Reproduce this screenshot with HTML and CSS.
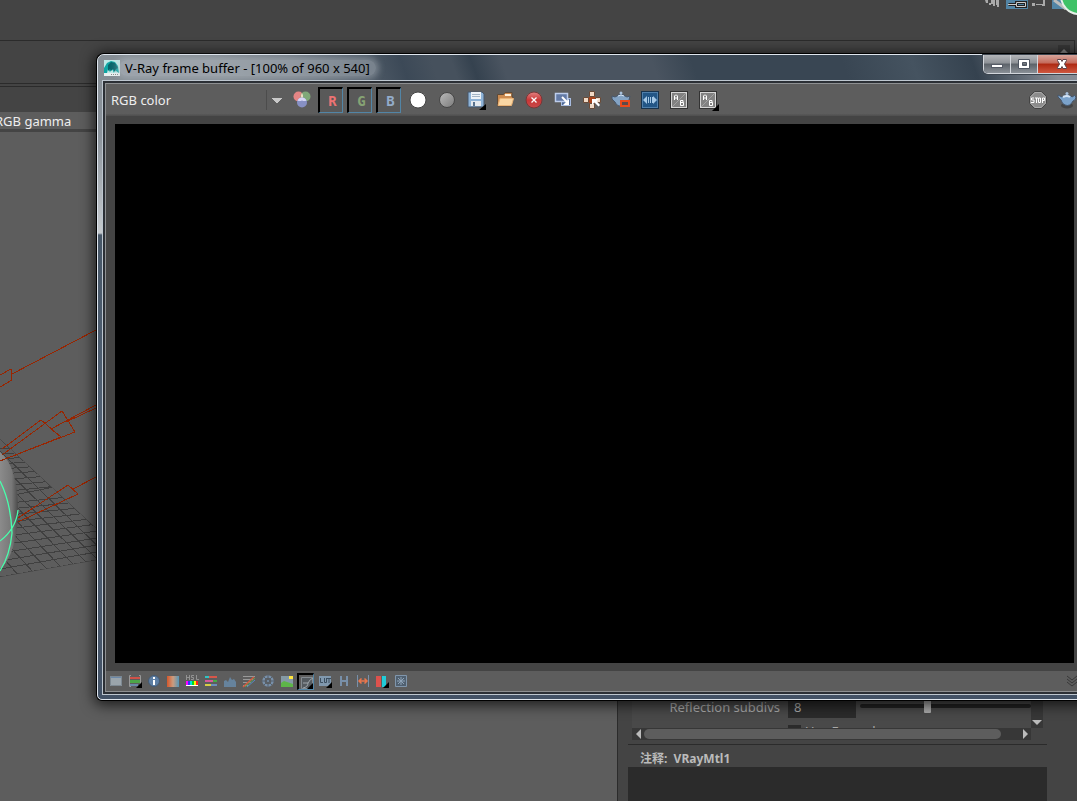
FILE: index.html
```html
<!DOCTYPE html>
<html lang="en">
<head>
<meta charset="utf-8">
<title>V-Ray frame buffer</title>
<link rel="stylesheet" href="styles.css">
</head>
<body>
<div class="app">
  <header class="status">
    <svg class="status-icons" width="92" height="10" viewBox="0 0 92 10">
      <path d="M0 0h3v3h3v2h-2V3H1zM6 0h4v6H8V4H6zM11 0h3v7h-2V5h-1z" fill="#aaa"/>
      <rect x="21" y="0" width="22" height="9" fill="#5285a6"/>
      <path d="M23.500 4.500h7M31.500 2.500h9v4h-9z" fill="none" stroke="#222" stroke-width="3"/>
      <path d="M23 4.500h8M31.500 2.500h9v4h-9z" fill="none" stroke="#ccc"/>
      <path d="M47 3h3v3h-3zM51 4h6v1h-6zM58 0h2v6h-3v-2h1z" fill="#aaa"/>
      <path d="M67 0h25v9H67z" fill="#5285a6"/><path d="M69 0l12 9" stroke="#bbb" stroke-width="3"/>
    </svg>
    <svg class="badge" width="40" height="40" viewBox="0 0 40 40"><circle cx="20" cy="20" r="18" fill="#3fc267" stroke="#e6efe8" stroke-width="2"/></svg>
  </header>
  <div class="shelf"><button class="scroll-up" aria-label="Scroll up"></button></div>
  <main class="work">
    <section class="viewport">
      <div class="spacer"></div>
      <div class="gamma">RGB gamma</div>
      <svg class="scene" width="97" height="270" viewBox="0 0 97 270">
        <defs>
          <clipPath id="floor"><path d="M0 119L97 209v31L0 257z"/></clipPath>
          <linearGradient id="ball"><stop offset="0" stop-color="#8b8b8b"/><stop offset=".65" stop-color="#777"/><stop offset="1" stop-color="#4a4a4a"/></linearGradient>
        </defs>
        <g clip-path="url(#floor)" fill="none" stroke="#404040" shape-rendering="crispEdges">
          <path d="M0 119L97 209M0 257L97 240M0 249L97 232M0 241L97 225M0 233L97 218M0 225L97 211M0 217L97 204M0 210L97 198M0 203L97 192M0 196L97 186M0 190L97 180M0 184L97 174M0 178L97 158M0 172L97 162M0 166L97 157M0 160L97 152M0 154L97 147M0 149L97 142M0 144L97 137M0 139L97 132M0 134L97 127M0 129L97 122"/>
          <path d="M0 131L112 240M0 144L100 242M0 157L88 244M0 170L74 245M0 184L62 248M0 200L48 250M0 216L34 253M0 234L18 255"/>
        </g>
        <path d="M0 132C15 144 18 170 18 193C17 224 10 240 0 249z" fill="url(#ball)"/>
        <path d="M0 161Q11 183 12 213Q10 235 0 251M0 221Q16 209 18 190" fill="none" stroke="#48ffac" stroke-width="1.300"/>
        <g fill="none" stroke="#992500" shape-rendering="crispEdges">
          <path d="M96 10L12 54M0 55L11 49L12 60L0 67"/>
          <path d="M96 85L51 109L61 117M96 88L66 102M2 135L62 91L75 112L0 141M2 129L41 100L61 117L5 139"/>
          <path d="M96 157L73 169M18 198L68 165L78 174L18 202"/>
        </g>
      </svg>
    </section>
    <aside class="panel">
      <div class="attributes">
        <div class="fields">
          <label class="field-label" for="subdivs">Reflection subdivs</label>
          <input class="field" id="subdivs" type="text" value="8">
          <input class="slider" type="range" min="0" max="100" value="39" aria-label="Reflection subdivs amount">
          <label class="check"><input type="checkbox" checked>Use Fresnel</label>
        </div>
        <div class="vbar"><button class="arrow down" aria-label="Scroll down"></button></div>
      </div>
      <div class="hbar">
        <button class="arrow left" aria-label="Scroll left"></button>
        <div class="thumb"></div>
        <button class="arrow right" aria-label="Scroll right"></button>
      </div>
      <label class="notes-label" for="notes">注释:&nbsp; VRayMtl1</label>
      <textarea class="notes" id="notes"></textarea>
    </aside>
  </main>
</div>

<div class="window">
  <div class="titlebar">
    <svg class="app-icon" width="16" height="16" viewBox="0 0 16 16"><rect width="16" height="16" fill="#bfe9e6"/><path d="M0 13V8l3-5 4-2 4 1 3 4 1 7-3-2-1-3-1 5-2-4-2 3-2-3-1 4z" fill="#0fa5a3"/><path d="M4 5l3-3 4 1 3 5-2 1-1 3-2-3-2 2-1-2-2 2z" fill="#08656b"/><path d="M0 13h16v3H0z" fill="#e9f1f1"/><path d="M7 14.500h7" stroke="#888" stroke-dasharray="1 1"/></svg>
    <span class="title">V-Ray frame buffer - [100% of 960 x 540]</span>
    <div class="controls">
      <button class="ctl" aria-label="Minimize"><svg width="14" height="10" viewBox="0 0 14 10"><rect x="1.500" y="5.500" width="11" height="3" fill="#fff" stroke="#555b66"/></svg></button>
      <button class="ctl" aria-label="Maximize"><svg width="14" height="12" viewBox="0 0 14 12"><path d="M1.500 1.500h11v9h-11zM5.500 4.500v3h4v-3z" fill="#fff" fill-rule="evenodd" stroke="#4e5561"/></svg></button>
      <button class="ctl close" aria-label="Close"><svg width="14" height="12" viewBox="0 0 14 12"><path d="M2.500 1.500H6l1 2 1-2h3.500v1L9.500 6l2 3.500v1H8l-1-2-1 2H2.500v-1l2-3.500-2-3.500z" fill="#fff" stroke="#59434a"/></svg></button>
    </div>
  </div>
  <div class="client">
    <div class="toolbar">
      <select class="channel" aria-label="Channel"><option>RGB color</option></select>
      <div class="tools">
        <button class="tool" aria-label="Color corrections"><svg width="20" height="20" viewBox="0 0 20 20"><circle cx="6.500" cy="6.500" r="5" fill="#e58585"/><circle cx="13.500" cy="6.500" r="5" fill="#7fa878"/><circle cx="10" cy="12.500" r="5" fill="#8790c4"/><path d="M10 3a5 5 0 0 1 1 4.500a5 5 0 0 1-2 0A5 5 0 0 1 10 3z" fill="#e8dcc0"/><path d="M5.500 10.500a5 5 0 0 1 4.500-3 5 5 0 0 1 4.500 3 5 5 0 0 1-4.500 0 5 5 0 0 1-4.500 0z" fill="#d5d5f5"/></svg></button>
        <button class="tool boxed red">R</button>
        <button class="tool boxed green">G</button>
        <button class="tool boxed blue">B</button>
        <button class="tool" aria-label="Alpha"><svg width="20" height="20" viewBox="0 0 20 20"><circle cx="10" cy="10" r="8" fill="#fff" stroke="#444"/></svg></button>
        <button class="tool" aria-label="Monochrome"><svg width="20" height="20" viewBox="0 0 20 20"><defs><linearGradient id="gray" x2="1" y2="1"><stop stop-color="#bbb"/><stop offset="1" stop-color="#7b7b7b"/></linearGradient></defs><circle cx="10" cy="10" r="7.500" fill="url(#gray)" stroke="#454545"/></svg></button>
        <button class="tool" aria-label="Save image"><svg width="22" height="22" viewBox="0 0 22 22"><path d="M3 3h14l2 2v13H3z" fill="#8db2d6" stroke="#47566a"/><path d="M6 3h10v7H6z" fill="#edf2f7"/><path d="M7 5.500h8M7 7.500h8" stroke="#a3b4c5"/><path d="M6 12h10v5H6z" fill="#e3e8ee"/><path d="M8 13h2v4H8z" fill="#58728e"/><path d="M21 15v6h-7z" fill="#000"/></svg></button>
        <button class="tool" aria-label="Load image"><svg width="20" height="20" viewBox="0 0 20 20"><path d="M2.500 16V4.500h6l1.500-2h7V7H18v1l-2 8z" fill="#cc8b50" stroke="#5e4a38"/><path d="M10 5h6" stroke="#fff0d8" stroke-width="2"/><path d="M3 15.500L5 8.500h13.500l-2 7z" fill="#f9d6a4" stroke="#e9b377"/></svg></button>
        <button class="tool" aria-label="Clear image"><svg width="20" height="20" viewBox="0 0 20 20"><defs><linearGradient id="redball" x2="0" y2="1"><stop stop-color="#e38282"/><stop offset=".5" stop-color="#c93636"/><stop offset="1" stop-color="#c84a4a"/></linearGradient></defs><circle cx="10" cy="10" r="8" fill="url(#redball)" stroke="#763838"/><path d="M7.500 7.500l5 5M12.500 7.500l-5 5" stroke="#fff" stroke-width="1.300"/></svg></button>
        <button class="tool" aria-label="Duplicate to host"><svg width="20" height="20" viewBox="0 0 20 20"><rect x="8.500" y="8.500" width="9" height="7" fill="#506b98" stroke="#a8bce0"/><rect x="2.500" y="3.500" width="12" height="8" fill="#637aa5" stroke="#bdcdec" stroke-width="1.500"/><path d="M9 7l5 5" stroke="#fff" stroke-width="2"/><path d="M16 9v6h-6z" fill="#fff"/></svg></button>
        <button class="tool" aria-label="Track mouse"><svg width="20" height="20" viewBox="0 0 20 20"><path d="M7.500 1.500h5v5h-5zM1.500 7.500h5v5h-5zM13.500 7.500h5v5h-5zM7.500 13.500h5v5h-5z" fill="#f0d9c6" stroke="#694b38"/><path d="M7 7h6v6H7z" fill="#a9431c"/><path d="M10 9h7l-2.500 2 3.500 4-1.500 1.500-4-4L10 15z" fill="#fff"/></svg></button>
        <button class="tool" aria-label="Region render"><svg width="22" height="20" viewBox="0 0 22 20"><path d="M2 6l3 1 2-1q4-4 8 0l2 1 3-1-1 4-2 2q-3 5-8 4-3-1-4-4L2 9z" fill="#83a3c4" stroke="#47566a"/><path d="M8 6q3-2 6 0" stroke="#d4e3f3" fill="none"/><circle cx="11" cy="3" r="1.500" fill="#a9c2dd"/><rect x="11" y="11" width="8" height="5" fill="#5c4a4a" stroke="#e84b1c" stroke-width="2"/></svg></button>
        <button class="tool" aria-label="Compare horizontally"><svg width="20" height="20" viewBox="0 0 20 20"><rect x="1.500" y="1.500" width="17" height="17" fill="#235686" stroke="#18334d"/><rect x="2.500" y="2.500" width="15" height="15" fill="none" stroke="#4f7fab"/><path d="M7 6v8L3 10zM13 6v8l4-4z" fill="#a5c8e6"/><path d="M8.500 7v6M10.500 7v6M12.500 7v6" stroke="#a5c8e6"/></svg></button>
        <button class="tool" aria-label="Set A and B"><svg width="20" height="20" viewBox="0 0 20 20"><rect x="1.500" y="1.500" width="17" height="17" fill="#828282" stroke="#333"/><rect x="2.500" y="2.500" width="15" height="15" fill="none" stroke="#d5d5d5"/><path d="M3 17L17 3" stroke="#a2a2a2"/><path d="M5.500 10V6l1-1h1l1 1v4M5.500 8h3M11.500 15.500v-5h2.500v2h-2.500M14 12.500h.5v3h-3" fill="none" stroke="#fff"/></svg></button>
        <button class="tool" aria-label="Compare menu"><svg width="22" height="22" viewBox="0 0 22 22"><rect x="2.500" y="2.500" width="17" height="17" fill="#828282" stroke="#333"/><rect x="3.500" y="3.500" width="15" height="15" fill="none" stroke="#d5d5d5"/><path d="M4 18L18 4" stroke="#a2a2a2"/><path d="M6.500 11V7l1-1h1l1 1v4M6.500 9h3M12.500 16.500v-5H15v2h-2.500M15 13.500h.5v3h-3" fill="none" stroke="#fff"/><path d="M22 15v7h-7z" fill="#000"/></svg></button>
      </div>
      <div class="tools end">
        <button class="tool" aria-label="Stop render"><svg width="20" height="20" viewBox="0 0 20 20"><path d="M6.500 1.500h7l5 5v7l-5 5h-7l-5-5v-7z" fill="#8c8c8c" stroke="#444"/><path d="M7 2.500h6L17.500 7v6L13 17.500H7L2.500 13V7z" fill="none" stroke="#aaa"/><path d="M6 8H3.500v2H6v2.500H3M7 8h3M8.500 8v5M10.500 8h2v4.500h-2zM14.500 13V8h2v2.500h-2" fill="none" stroke="#fff"/></svg></button>
        <button class="tool" aria-label="Render last"><svg width="20" height="20" viewBox="0 0 20 20"><ellipse cx="10" cy="15.500" rx="6" ry="3" fill="#444"/><path d="M1 5l4 2 1-1q4-3 8 0l1 1q3-3 4 0 0 3-3 4-3 6-8 4-3-1-4-5L1 7z" fill="#7ba2ca" stroke="#47566a"/><path d="M6 7q4-2 7 0" stroke="#d4e3f3" stroke-width="2" fill="none"/><circle cx="10" cy="3.500" r="1.500" fill="#a9c2dd"/></svg></button>
      </div>
    </div>
    <div class="canvas"></div>
    <div class="bottombar">
      <button class="mini" aria-label="Show corrections"><svg width="16" height="16" viewBox="0 0 16 16"><rect x="2" y="3" width="12" height="10" fill="#9aa4ab"/><path d="M2 3h12v2H2z" fill="#6b88a8"/><path d="M2.500 3.500h11v9h-11z" fill="none" stroke="#7d8891"/></svg></button>
      <button class="mini" aria-label="Force color clamping"><svg width="16" height="16" viewBox="0 0 16 16"><path d="M4 2.500H2.500v11H4M12 2.500h1.500v11H12" fill="none" stroke="#999"/><path d="M3 4h10v2H3z" fill="#cf5148"/><path d="M3 7h10v3H3z" fill="#4ca548"/><path d="M3 11h8v2H3z" fill="#6b88a8"/><path d="M15 9v6H9z" fill="#000"/></svg></button>
      <button class="mini" aria-label="Pixel information"><svg width="16" height="16" viewBox="0 0 16 16"><circle cx="8" cy="8" r="5.500" fill="#5e7fa4" stroke="#445a73"/><path d="M8 4v2M8 7v5" stroke="#fff" stroke-width="2"/></svg></button>
      <button class="mini" aria-label="White balance"><svg width="16" height="16" viewBox="0 0 16 16"><defs><linearGradient id="wb"><stop stop-color="#d4572b"/><stop offset=".5" stop-color="#cc9c7e"/><stop offset="1" stop-color="#5596b8"/></linearGradient></defs><rect x="2" y="3" width="12" height="11" fill="url(#wb)"/></svg></button>
      <button class="mini" aria-label="Hue and saturation"><svg width="16" height="16" viewBox="0 0 16 16"><path d="M2.500 2v5M5.500 2v5M2.500 4.500h3M10 2.500H7.500v2h2v2H7M12.500 2v4.500H15" fill="none" stroke="#929292"/><path d="M2 8h2v4H2z" fill="#f0f"/><path d="M4 8h2v4H4z" fill="#33f"/><path d="M6 8h2v4H6z" fill="#0dd"/><path d="M8 8h2v4H8z" fill="#0d2"/><path d="M10 8h2v4h-2z" fill="#fe0"/><path d="M12 8h2v4h-2z" fill="#f22"/><path d="M2 12.500h12" stroke="#fff"/></svg></button>
      <button class="mini" aria-label="Color balance"><svg width="16" height="16" viewBox="0 0 16 16"><path d="M2 4h4" stroke="#2fc4c4" stroke-width="2"/><path d="M6 4h8" stroke="#d7564a" stroke-width="2"/><path d="M2 8h8" stroke="#d6589b" stroke-width="2"/><path d="M10 8h4" stroke="#46aa46" stroke-width="2"/><path d="M2 12h6" stroke="#d9cd45" stroke-width="2"/><path d="M8 12h6" stroke="#6c8ebb" stroke-width="2"/></svg></button>
      <button class="mini" aria-label="Levels"><svg width="16" height="16" viewBox="0 0 16 16"><path d="M2 14V8l2-1 2 2 2-5 2 3 2-1 2 3v5z" fill="#66839d"/></svg></button>
      <button class="mini" aria-label="Curve"><svg width="16" height="16" viewBox="0 0 16 16"><path d="M2 3.500h12M2 6.500h10M2 9.500h8M2 12.500h5" stroke="#999"/><path d="M2 14L13 4" stroke="#d35a3e" stroke-width="1.500"/><path d="M4 14l10-9" stroke="#5ba152"/><path d="M6 14l8-7" stroke="#578ac5"/></svg></button>
      <button class="mini" aria-label="Exposure"><svg width="16" height="16" viewBox="0 0 16 16"><circle cx="8" cy="8" r="4.500" fill="none" stroke="#7890aa" stroke-width="2.500"/><path d="M8 1v14M1 8h14M4 4l8 8M12 4l-8 8" stroke="#56616c"/><circle cx="8" cy="8" r="1" fill="#7890aa"/></svg></button>
      <button class="mini" aria-label="Background image"><svg width="16" height="16" viewBox="0 0 16 16"><path d="M2 3h12v11H2z" fill="#8499a5"/><path d="M2 10l3-2 3 1 6 2v3H2z" fill="#5db548"/><path d="M10 3h4v3h-4z" fill="#ffe640"/></svg></button>
      <button class="mini pressed" aria-label="Display sRGB"><svg width="16" height="16" viewBox="0 0 16 16"><path d="M2.500 2.500h11v11h-11z" fill="#555b60" stroke="#848b91"/><path d="M4 13q5-1 5-5 2-4 5-5M4 8h5" fill="none" stroke="#a0a7ac"/><path d="M14 8v6H8z" fill="#000"/></svg></button>
      <button class="mini" aria-label="Lookup table"><svg width="16" height="16" viewBox="0 0 16 16"><path d="M2 3h12v10H2z" fill="#8098ae"/><path d="M3.500 5v4.500H6M7.500 5v4.500h2V5M10 5.500h4M12 6v4" fill="none" stroke="#3c4f60"/><path d="M15 9v6H9z" fill="#000"/></svg></button>
      <button class="mini" aria-label="Flip horizontally"><svg width="16" height="16" viewBox="0 0 16 16"><path d="M5 3v10M11 3v10M5 8h6" stroke="#7890aa" stroke-width="2"/></svg></button>
      <button class="mini" aria-label="Pixel aspect"><svg width="16" height="16" viewBox="0 0 16 16"><path d="M2.500 2v12M13.500 2v12" stroke="#7890aa"/><path d="M4 8h8M6.500 5.500L4 8l2.500 2.500M9.500 5.500L12 8l-2.500 2.500" fill="none" stroke="#eb764c" stroke-width="1.500"/></svg></button>
      <button class="mini" aria-label="Stereo red and cyan"><svg width="16" height="16" viewBox="0 0 16 16"><path d="M2 3h5v11H2z" fill="#dc524d"/><path d="M8 3h4v11H8z" fill="#21cbd8"/><path d="M15 9v6H9z" fill="#000"/></svg></button>
      <button class="mini" aria-label="Lens effects"><svg width="16" height="16" viewBox="0 0 16 16"><path d="M2.500 2.500h11v11h-11z" fill="#506070" stroke="#8096ac"/><path d="M8 4v8M4 8h8M5 5l6 6M11 5l-6 6" stroke="#8fa4b8"/></svg></button>
      <svg class="expand" width="12" height="12" viewBox="0 0 12 12"><path d="M1 1l5 4 5-4M1 4l5 4 5-4M1 7l5 4 5-4" fill="none" stroke="#383838"/></svg>
    </div>
  </div>
</div>
</body>
</html>
```
FILE: styles.css
```css
* { box-sizing: border-box; }
body {
  margin: 0;
  height: 100vh;
  overflow: hidden;
  position: relative;
  background: #444;
  color: #ddd;
  font: 13px/16px "Noto Sans", "Noto Sans CJK SC", sans-serif;
}
button { padding: 0; border: 0; background: none; color: inherit; font: inherit; }
svg { display: block; flex: none; }

/* Main application */
.app { display: flex; flex-direction: column; height: 100%; }
.status { position: relative; display: flex; justify-content: flex-end; height: 40px; flex: none; }
.badge { position: absolute; top: -24px; right: -22px; }
.shelf {
  display: flex;
  justify-content: flex-end;
  height: 47px;
  flex: none;
  margin-right: 2px;
  padding: 4px;
  border: solid #2b2b2b;
  border-width: 1px 1px 1px 0;
  box-shadow: inset 0 -2px #444, inset 0 -3px #2b2b2b;
}
.scroll-up { width: 12px; height: 12px; background: #373737; }
.scroll-up::before, .arrow::before { content: ""; display: block; margin: auto; width: 0; border: 5px solid transparent; }
.scroll-up::before { border-width: 0 5px 5px; border-bottom-color: #888; }
.work { display: flex; flex: 1; min-height: 0; }
.viewport { position: relative; flex: 1; background: #5d5d5d; }
.spacer { height: 25px; background: #444; }
.gamma {
  height: 20px;
  border-bottom: 3px solid #444;
  color: #eee;
  line-height: 18px;
  text-indent: -5px;
}
.scene { position: absolute; left: 0; top: 233px; }

.panel {
  display: flex;
  flex: 0 0 460px;
  flex-direction: column;
  justify-content: flex-end;
  padding: 0 30px 0 10px;
  border-left: 1px solid #2b2b2b;
  background: #444;
  box-shadow: -2px 0 #4a4a4a;
}
.attributes { display: flex; height: 40px; margin: 0 4px; }
.fields {
  display: grid;
  flex: 1;
  grid-template-columns: 152px 68px 1fr;
  grid-template-rows: 30px 20px;
  column-gap: 4px;
  overflow: hidden;
  background: #494949;
}
.field-label { padding-right: 4px; color: #aaa; line-height: 38px; text-align: right; }
.field { width: 100%; padding: 8px 6px 0; border: 0; background: #2b2b2b; color: #aaa; font: inherit; }
.slider { width: 100%; height: 20px; margin: 8px 0 0; appearance: none; background: none; }
.slider::-webkit-slider-runnable-track { height: 4px; border-radius: 2px; background: #222; }
.slider::-webkit-slider-thumb { appearance: none; width: 7px; height: 14px; margin-top: -5px; border-radius: 1px; background: #aaa; }
.check { grid-column: 2 / 4; display: flex; align-items: center; gap: 4px; margin-top: 6px; color: #aaa; }
.check input { width: 13px; height: 13px; margin: 0; appearance: none; background: #2b2b2b; }
.vbar { display: flex; align-items: flex-end; width: 12px; background: #373737; }
.hbar { display: flex; height: 12px; margin: 0 16px 4px 4px; background: #373737; }
.thumb { flex: 1; margin: 1px 18px 1px 0; border-radius: 6px; background: #5d5d5d; }
.arrow { width: 12px; height: 12px; }
.arrow.down::before { border-width: 5px 5px 0; border-top-color: #bbb; }
.arrow.left::before { border-width: 5px 5px 5px 0; border-right-color: #bbb; }
.arrow.right::before { border-width: 5px 0 5px 5px; border-left-color: #bbb; }
.notes-label { height: 23px; padding-left: 12px; border-top: 1px solid #2b2b2b; color: #bbb; font-size: 12px; font-weight: bold; line-height: 28px; }
.notes { width: 100%; height: 34px; flex: none; border: 0; background: #2b2b2b; color: #ccc; resize: none; }

/* Floating frame buffer */
.window {
  position: absolute;
  top: 54px;
  right: -14px;
  bottom: 101px;
  left: 97px;
  display: flex;
  flex-direction: column;
  padding: 0 4px 4px;
  border: 1px solid #dfe6ee;
  border-radius: 7px 7px 5px 5px;
  background: linear-gradient(#858d94, #8b939b 80px, #c5cace 178px, #475768 180px, #526174 400px, #435266);
  box-shadow: 0 0 0 1px #000, 0 2px 14px 3px rgba(0, 0, 0, .7);
}
.titlebar {
  display: flex;
  align-items: center;
  gap: 5px;
  height: 26px;
  flex: none;
  margin: 0 -4px;
  padding-left: 6px;
  border-radius: 6px 6px 0 0;
  background: linear-gradient(70deg, #858d94 0 12%, #727b84 20%, #3c4957 31%, #46515d 34% 36%, #35424f 38%, #4a5460 41% 56%, #394653 60% 75%, #455360 82%, #35424f 88%, #888d96 96%);
}
.title {
  margin: 0 -6px;
  padding: 0 6px;
  border-radius: 8px;
  background: rgba(190, 197, 204, .4);
  box-shadow: 0 0 6px 3px rgba(190, 197, 204, .4);
  color: #000;
}
.controls {
  display: flex;
  align-self: flex-start;
  height: 19px;
  margin: 0 4px 0 auto;
  border: solid #d2d6dc;
  border-width: 0 1px 1px;
  border-radius: 0 0 5px 5px;
  box-shadow: 0 0 0 1px #3c444e;
  overflow: hidden;
}
.ctl {
  display: grid;
  place-items: center;
  width: 27px;
  border-right: 1px solid #d2d6dc;
  background: linear-gradient(#b3b5b9, #8d9196 45%, #5c6269 50%, #8a9097);
}
.close { width: 47px; border: 0; background: linear-gradient(#d6a59b, #c4695a 45%, #ad2811 50%, #cf5740); }
.client {
  display: flex;
  flex: 1;
  flex-direction: column;
  min-height: 0;
  border: 1px solid #8d8f91;
  outline: 2px solid #2b2f35;
  box-shadow: 0 0 0 3px #bdc6cf;
  margin: 2px 3px 3px;
  background: #444;
}
.toolbar {
  display: flex;
  align-items: center;
  justify-content: space-between;
  height: 32px;
  flex: none;
  padding-right: 3px;
  background: linear-gradient(#5d5d5d 92%, #4e4e4e);
}
.channel {
  width: 182px;
  height: 24px;
  padding: 0 0 0 5px;
  border: 0;
  appearance: none;
  color: #eee;
  font: inherit;
  background:
    linear-gradient(#4c4c4c, #4c4c4c) 160px 2px / 1px 20px no-repeat,
    linear-gradient(to bottom left, #c8c8c8 50%, transparent 51%) 166px 10px / 5px 5px no-repeat,
    linear-gradient(to bottom right, #c8c8c8 50%, transparent 51%) 171px 10px / 5px 5px no-repeat;
}
.tools { display: flex; flex: 1; gap: 4px; margin-left: 1px; }
.tools.end { flex: none; }
.tool { display: grid; place-items: center; width: 25px; height: 26px; }
.boxed {
  padding-left: 3px;
  border: solid;
  border-width: 2px 1px 1px 2px;
  border-color: #000 #5285a6 #5285a6 #000;
  background: #595959;
  font: bold 14px/20px "DejaVu Sans Mono", monospace;
}
.red { color: #ec7373; }
.green { color: #86a374; }
.blue { color: #93acca; }
.canvas { flex: 1; margin: 8px 8px 8px 9px; background: #000; }
.bottombar { display: flex; align-items: center; gap: 2px; height: 20px; flex: none; padding: 0 4px 0 1px; background: #5d5d5d; }
.mini { display: grid; place-items: center; width: 17px; height: 17px; }
.pressed { border: solid; border-width: 2px 1px 1px 2px; border-color: #000 #5285a6 #5285a6 #000; overflow: hidden; }
.expand { margin-left: auto; }
```
